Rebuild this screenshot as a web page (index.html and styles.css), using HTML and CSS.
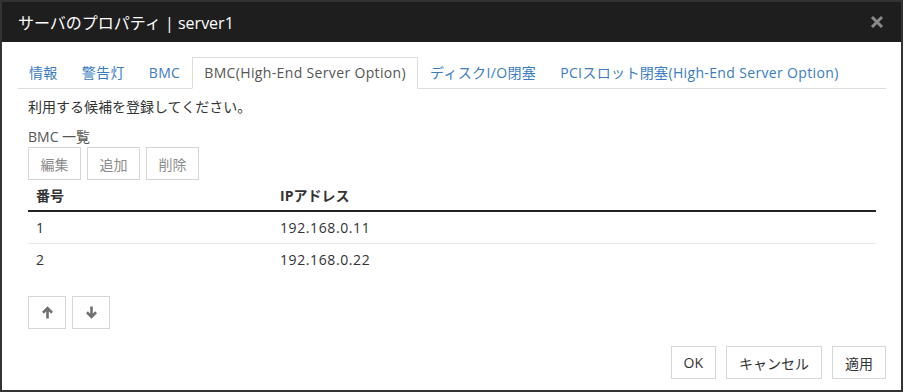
FILE: index.html
```html
<!DOCTYPE html>
<html>
<head>
	<meta charset="utf-8">
	<title>サーバのプロパティ | server1</title>
	<link rel="stylesheet" href="styles.css">
</head>
<body>
<div class="dialog">
	<div class="dialog-header">
		<span class="dialog-title">サーバのプロパティ | server1</span>
		<span class="close">
			<svg width="14" height="14" viewBox="0 0 14 14"><path d="M2 2L12 12M12 2L2 12" stroke="#8a8a8a" stroke-width="3" fill="none"/></svg>
		</span>
	</div>
	<div class="dialog-body">
		<ul class="tabs">
			<li><a>情報</a></li>
			<li><a>警告灯</a></li>
			<li><a>BMC</a></li>
			<li class="active"><a>BMC(High-End Server Option)</a></li>
			<li><a>ディスクI/O閉塞</a></li>
			<li><a>PCIスロット閉塞(High-End Server Option)</a></li>
		</ul>
		<div class="pane">
			<p class="lead">利用する候補を登録してください。</p>
			<div class="list-label">BMC 一覧</div>
			<div class="toolbar">
				<button class="btn muted">編集</button>
				<button class="btn muted">追加</button>
				<button class="btn muted">削除</button>
			</div>
			<table class="grid">
				<thead>
					<tr><th class="col-no">番号</th><th>IPアドレス</th></tr>
				</thead>
				<tbody>
					<tr><td>1</td><td>192.168.0.11</td></tr>
					<tr><td>2</td><td>192.168.0.22</td></tr>
				</tbody>
			</table>
			<div class="toolbar order">
				<button class="btn arrow"><svg width="13" height="13" viewBox="0 0 12 12"><path d="M6 11.5V2M1.8 6.2L6 2l4.2 4.2" stroke="#707070" stroke-width="2.4" fill="none"/></svg></button>
				<button class="btn arrow"><svg width="13" height="13" viewBox="0 0 12 12"><path d="M6 0.5V10M1.8 5.8L6 10l4.2-4.2" stroke="#707070" stroke-width="2.4" fill="none"/></svg></button>
			</div>
		</div>
	</div>
	<div class="dialog-footer">
		<button class="btn">OK</button>
		<button class="btn">キャンセル</button>
		<button class="btn">適用</button>
	</div>
</div>
</body>
</html>
```

FILE: styles.css
```css
body {
	margin:0;
	font-family:"Open Sans", "Noto Sans CJK JP", sans-serif;
	font-size:14px;
	color:#333;
	background-color:#fff;
}

.dialog {
	box-sizing:border-box;
	width:903px;
	height:392px;
	border:2px solid #333;
	display:flex;
	flex-direction:column;
}

.dialog-header {
	display:flex;
	align-items:center;
	justify-content:space-between;
	height:40px;
	padding:0 17px 0 16px;
	background-color:#1e1e1e;
	color:#fff;
}
.dialog-title {
	font-size:16px;
}
.close {
	display:flex;
}

.dialog-body {
	flex:1;
	padding:15px 15px 0 15px;
}

/* 탭 */
.tabs {
	display:flex;
	margin:0 0 0 1px;
	padding:0;
	list-style:none;
	border-bottom:1px solid #ddd;
}
.tabs li {
	margin-bottom:-1px;
}
.tabs a {
	display:block;
	padding:5px 11px;
	line-height:20px;
	letter-spacing:0.35px;
	border:1px solid transparent;
	color:#3a7cc2;
}
.tabs li:first-child a {
	padding-left:10px;
}
.tabs .active a {
	color:#555;
	background-color:#fff;
	border-color:#ddd #ddd transparent #ddd;
}

.pane {
	padding:0 10px 0 11px;
}
.lead {
	margin:0;
	padding-top:8px;
	line-height:20px;
}
.list-label {
	margin-top:10px;
	line-height:20px;
	color:#555;
}

.toolbar {
	display:flex;
	gap:6px;
}
.btn {
	box-sizing:border-box;
	height:33px;
	padding:0 12px;
	font-family:inherit;
	font-size:14px;
	color:#333;
	background-color:#fff;
	border:1px solid #d6d6d6;
	border-radius:0;
}
.btn.muted {
	padding:0 11.5px;
	color:#8c8c8c;
}
.btn.arrow {
	width:38px;
	padding:0;
	display:flex;
	align-items:center;
	justify-content:center;
}

.grid {
	width:848px;
	margin-top:1px;
	border-collapse:collapse;
	letter-spacing:0.6px;
}
.grid th {
	text-align:left;
	padding:5px 8px 4px 8px;
	line-height:20px;
	border-bottom:2px solid #222;
	font-weight:bold;
	letter-spacing:0;
}
.grid .col-no {
	width:228px;
}
.grid td {
	padding:5px 8px 5px 8px;
	line-height:21px;
}
.grid tbody tr + tr td {
	border-top:1px solid #e8e8e8;
}

.order {
	margin-top:21px;
}

.dialog-footer {
	display:flex;
	justify-content:flex-end;
	gap:10px;
	padding:0 15px 11px 0;
}
```
